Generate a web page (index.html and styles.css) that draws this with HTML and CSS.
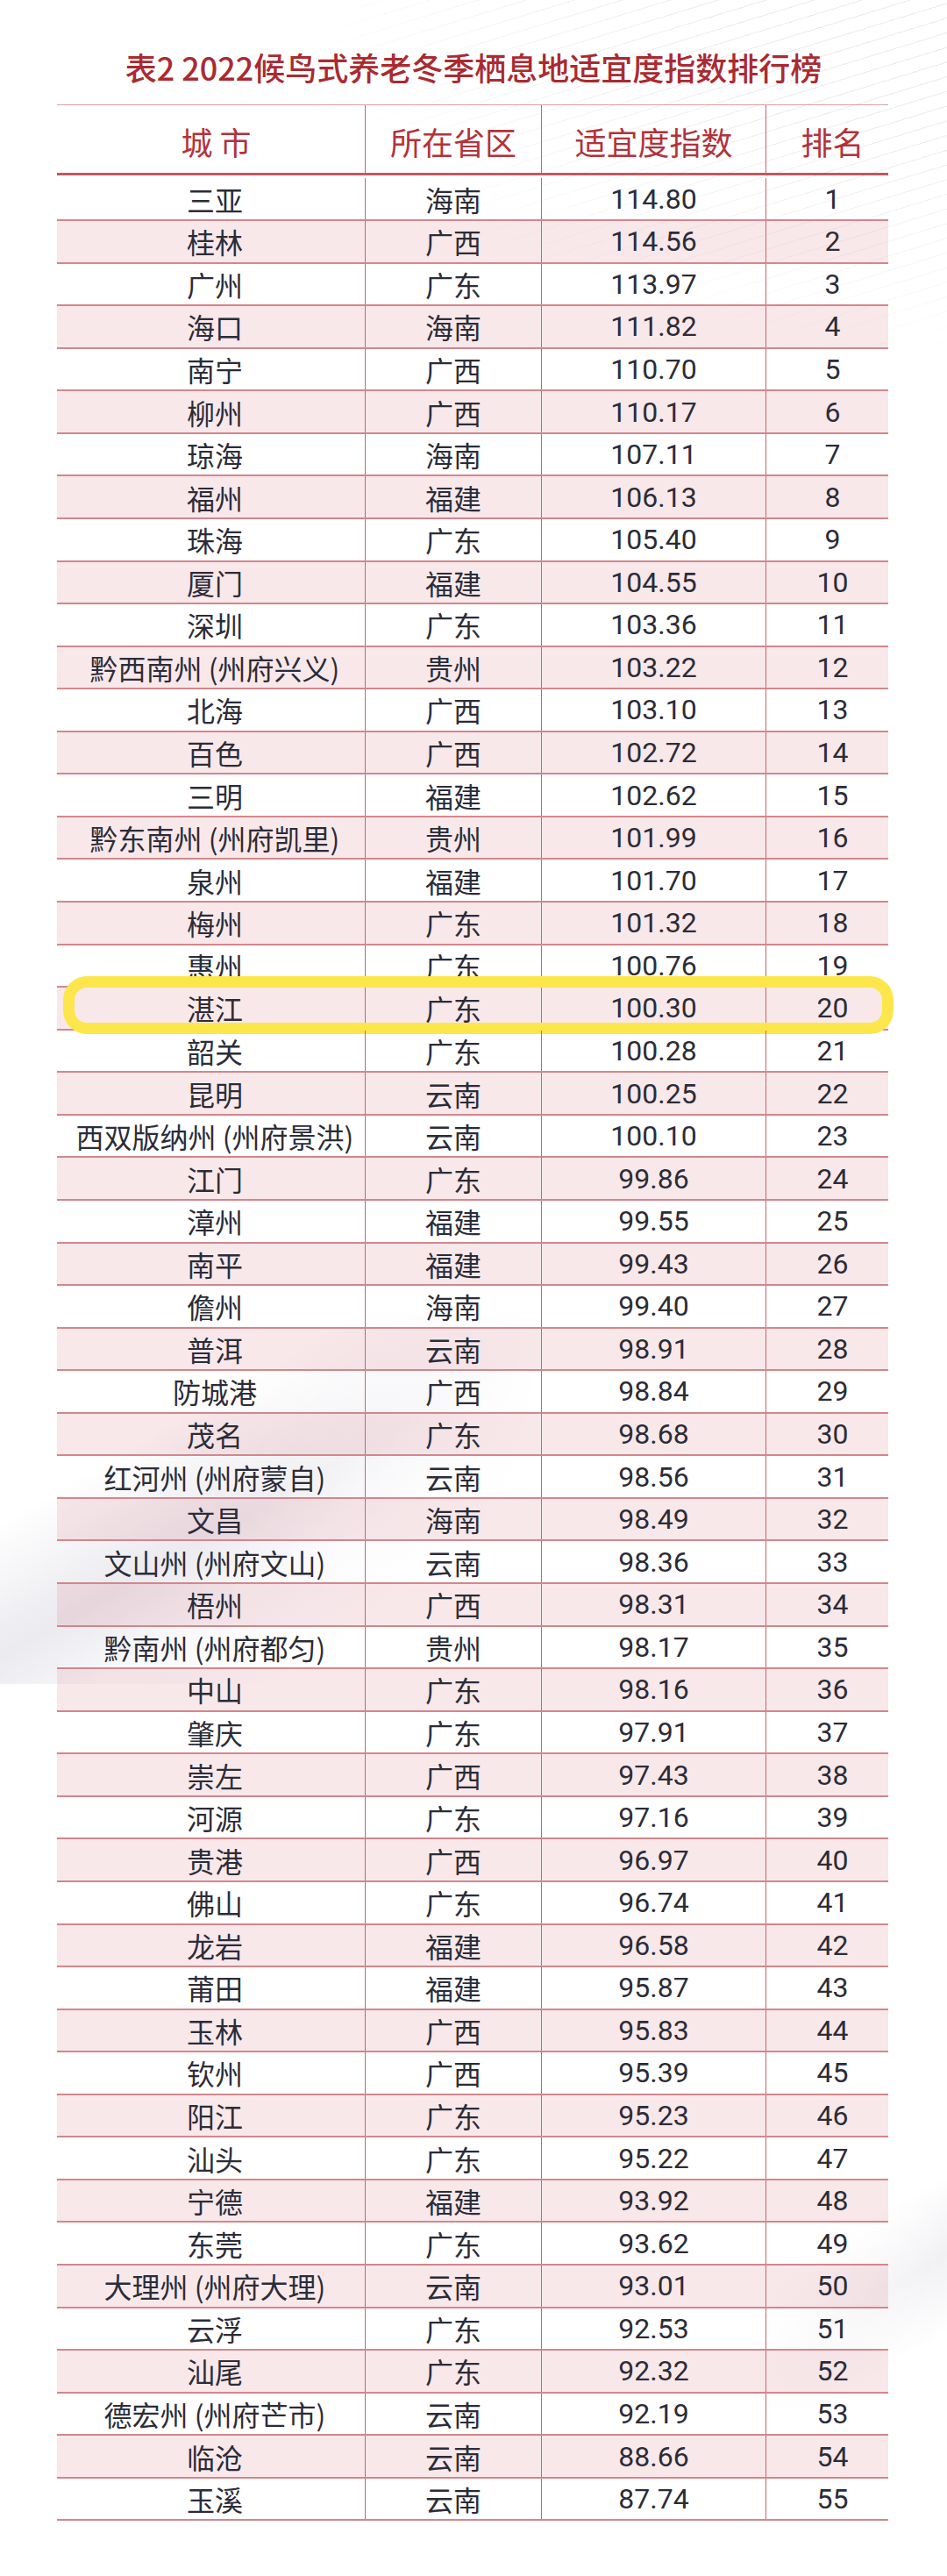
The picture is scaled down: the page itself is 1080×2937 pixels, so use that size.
FILE: index.html
```html
<!DOCTYPE html>
<html lang="zh-CN">
<head>
<meta charset="utf-8">
<title>表2 2022候鸟式养老冬季栖息地适宜度指数排行榜</title>
<link rel="stylesheet" href="styles.css">
</head>
<body>
<div class="page">
  <h1 class="title">表2 2022候鸟式养老冬季栖息地适宜度指数排行榜</h1>
  <div class="table" role="table">
    <div class="row head" role="row">
      <div class="cell city" role="columnheader">城 市</div>
      <div class="cell" role="columnheader">所在省区</div>
      <div class="cell" role="columnheader">适宜度指数</div>
      <div class="cell rank" role="columnheader">排名</div>
    </div>
    <div class="row first" role="row"><div class="cell city">三亚</div><div class="cell">海南</div><div class="cell num">114.80</div><div class="cell num rank">1</div></div>
    <div class="row alt" role="row"><div class="cell city">桂林</div><div class="cell">广西</div><div class="cell num">114.56</div><div class="cell num rank">2</div></div>
    <div class="row" role="row"><div class="cell city">广州</div><div class="cell">广东</div><div class="cell num">113.97</div><div class="cell num rank">3</div></div>
    <div class="row alt" role="row"><div class="cell city">海口</div><div class="cell">海南</div><div class="cell num">111.82</div><div class="cell num rank">4</div></div>
    <div class="row" role="row"><div class="cell city">南宁</div><div class="cell">广西</div><div class="cell num">110.70</div><div class="cell num rank">5</div></div>
    <div class="row alt" role="row"><div class="cell city">柳州</div><div class="cell">广西</div><div class="cell num">110.17</div><div class="cell num rank">6</div></div>
    <div class="row" role="row"><div class="cell city">琼海</div><div class="cell">海南</div><div class="cell num">107.11</div><div class="cell num rank">7</div></div>
    <div class="row alt" role="row"><div class="cell city">福州</div><div class="cell">福建</div><div class="cell num">106.13</div><div class="cell num rank">8</div></div>
    <div class="row" role="row"><div class="cell city">珠海</div><div class="cell">广东</div><div class="cell num">105.40</div><div class="cell num rank">9</div></div>
    <div class="row alt" role="row"><div class="cell city">厦门</div><div class="cell">福建</div><div class="cell num">104.55</div><div class="cell num rank">10</div></div>
    <div class="row" role="row"><div class="cell city">深圳</div><div class="cell">广东</div><div class="cell num">103.36</div><div class="cell num rank">11</div></div>
    <div class="row alt" role="row"><div class="cell city">黔西南州 (州府兴义)</div><div class="cell">贵州</div><div class="cell num">103.22</div><div class="cell num rank">12</div></div>
    <div class="row" role="row"><div class="cell city">北海</div><div class="cell">广西</div><div class="cell num">103.10</div><div class="cell num rank">13</div></div>
    <div class="row alt" role="row"><div class="cell city">百色</div><div class="cell">广西</div><div class="cell num">102.72</div><div class="cell num rank">14</div></div>
    <div class="row" role="row"><div class="cell city">三明</div><div class="cell">福建</div><div class="cell num">102.62</div><div class="cell num rank">15</div></div>
    <div class="row alt" role="row"><div class="cell city">黔东南州 (州府凯里)</div><div class="cell">贵州</div><div class="cell num">101.99</div><div class="cell num rank">16</div></div>
    <div class="row" role="row"><div class="cell city">泉州</div><div class="cell">福建</div><div class="cell num">101.70</div><div class="cell num rank">17</div></div>
    <div class="row alt" role="row"><div class="cell city">梅州</div><div class="cell">广东</div><div class="cell num">101.32</div><div class="cell num rank">18</div></div>
    <div class="row" role="row"><div class="cell city">惠州</div><div class="cell">广东</div><div class="cell num">100.76</div><div class="cell num rank">19</div></div>
    <div class="row alt marked" role="row"><div class="cell city">湛江</div><div class="cell">广东</div><div class="cell num">100.30</div><div class="cell num rank">20</div><div class="ring" aria-hidden="true"></div></div>
    <div class="row" role="row"><div class="cell city">韶关</div><div class="cell">广东</div><div class="cell num">100.28</div><div class="cell num rank">21</div></div>
    <div class="row alt" role="row"><div class="cell city">昆明</div><div class="cell">云南</div><div class="cell num">100.25</div><div class="cell num rank">22</div></div>
    <div class="row" role="row"><div class="cell city">西双版纳州 (州府景洪)</div><div class="cell">云南</div><div class="cell num">100.10</div><div class="cell num rank">23</div></div>
    <div class="row alt" role="row"><div class="cell city">江门</div><div class="cell">广东</div><div class="cell num">99.86</div><div class="cell num rank">24</div></div>
    <div class="row" role="row"><div class="cell city">漳州</div><div class="cell">福建</div><div class="cell num">99.55</div><div class="cell num rank">25</div></div>
    <div class="row alt" role="row"><div class="cell city">南平</div><div class="cell">福建</div><div class="cell num">99.43</div><div class="cell num rank">26</div></div>
    <div class="row" role="row"><div class="cell city">儋州</div><div class="cell">海南</div><div class="cell num">99.40</div><div class="cell num rank">27</div></div>
    <div class="row alt" role="row"><div class="cell city">普洱</div><div class="cell">云南</div><div class="cell num">98.91</div><div class="cell num rank">28</div></div>
    <div class="row" role="row"><div class="cell city">防城港</div><div class="cell">广西</div><div class="cell num">98.84</div><div class="cell num rank">29</div></div>
    <div class="row alt" role="row"><div class="cell city">茂名</div><div class="cell">广东</div><div class="cell num">98.68</div><div class="cell num rank">30</div></div>
    <div class="row" role="row"><div class="cell city">红河州 (州府蒙自)</div><div class="cell">云南</div><div class="cell num">98.56</div><div class="cell num rank">31</div></div>
    <div class="row alt" role="row"><div class="cell city">文昌</div><div class="cell">海南</div><div class="cell num">98.49</div><div class="cell num rank">32</div></div>
    <div class="row" role="row"><div class="cell city">文山州 (州府文山)</div><div class="cell">云南</div><div class="cell num">98.36</div><div class="cell num rank">33</div></div>
    <div class="row alt" role="row"><div class="cell city">梧州</div><div class="cell">广西</div><div class="cell num">98.31</div><div class="cell num rank">34</div></div>
    <div class="row" role="row"><div class="cell city">黔南州 (州府都匀)</div><div class="cell">贵州</div><div class="cell num">98.17</div><div class="cell num rank">35</div></div>
    <div class="row alt" role="row"><div class="cell city">中山</div><div class="cell">广东</div><div class="cell num">98.16</div><div class="cell num rank">36</div></div>
    <div class="row" role="row"><div class="cell city">肇庆</div><div class="cell">广东</div><div class="cell num">97.91</div><div class="cell num rank">37</div></div>
    <div class="row alt" role="row"><div class="cell city">崇左</div><div class="cell">广西</div><div class="cell num">97.43</div><div class="cell num rank">38</div></div>
    <div class="row" role="row"><div class="cell city">河源</div><div class="cell">广东</div><div class="cell num">97.16</div><div class="cell num rank">39</div></div>
    <div class="row alt" role="row"><div class="cell city">贵港</div><div class="cell">广西</div><div class="cell num">96.97</div><div class="cell num rank">40</div></div>
    <div class="row" role="row"><div class="cell city">佛山</div><div class="cell">广东</div><div class="cell num">96.74</div><div class="cell num rank">41</div></div>
    <div class="row alt" role="row"><div class="cell city">龙岩</div><div class="cell">福建</div><div class="cell num">96.58</div><div class="cell num rank">42</div></div>
    <div class="row" role="row"><div class="cell city">莆田</div><div class="cell">福建</div><div class="cell num">95.87</div><div class="cell num rank">43</div></div>
    <div class="row alt" role="row"><div class="cell city">玉林</div><div class="cell">广西</div><div class="cell num">95.83</div><div class="cell num rank">44</div></div>
    <div class="row" role="row"><div class="cell city">钦州</div><div class="cell">广西</div><div class="cell num">95.39</div><div class="cell num rank">45</div></div>
    <div class="row alt" role="row"><div class="cell city">阳江</div><div class="cell">广东</div><div class="cell num">95.23</div><div class="cell num rank">46</div></div>
    <div class="row" role="row"><div class="cell city">汕头</div><div class="cell">广东</div><div class="cell num">95.22</div><div class="cell num rank">47</div></div>
    <div class="row alt" role="row"><div class="cell city">宁德</div><div class="cell">福建</div><div class="cell num">93.92</div><div class="cell num rank">48</div></div>
    <div class="row" role="row"><div class="cell city">东莞</div><div class="cell">广东</div><div class="cell num">93.62</div><div class="cell num rank">49</div></div>
    <div class="row alt" role="row"><div class="cell city">大理州 (州府大理)</div><div class="cell">云南</div><div class="cell num">93.01</div><div class="cell num rank">50</div></div>
    <div class="row" role="row"><div class="cell city">云浮</div><div class="cell">广东</div><div class="cell num">92.53</div><div class="cell num rank">51</div></div>
    <div class="row alt" role="row"><div class="cell city">汕尾</div><div class="cell">广东</div><div class="cell num">92.32</div><div class="cell num rank">52</div></div>
    <div class="row" role="row"><div class="cell city">德宏州 (州府芒市)</div><div class="cell">云南</div><div class="cell num">92.19</div><div class="cell num rank">53</div></div>
    <div class="row alt" role="row"><div class="cell city">临沧</div><div class="cell">云南</div><div class="cell num">88.66</div><div class="cell num rank">54</div></div>
    <div class="row" role="row"><div class="cell city">玉溪</div><div class="cell">云南</div><div class="cell num">87.74</div><div class="cell num rank">55</div></div>
  </div>
</div>
</body>
</html>
```
FILE: styles.css
```css
html, body {
  margin: 0;
  padding: 0;
  background: #ffffff;
}

.page {
  width: 1080px;
  height: 2937px;
  box-sizing: border-box;
  padding-top: 56px;
  font-family: "Noto Sans CJK SC", "Noto Sans", sans-serif;
  color: #2c2c38;
  background:
    radial-gradient(ellipse 760px 420px at 100% 0%, rgba(255,255,255,0) 0%, rgba(255,255,255,0) 35%, #ffffff 100%) 0 0 / 1080px 520px no-repeat,
    repeating-linear-gradient(163deg, rgba(255,255,255,0) 0 15px, rgba(160,160,180,0.20) 15px 16px) 0 0 / 1080px 520px no-repeat,
    linear-gradient(to right, rgba(255,255,255,0) 0%, rgba(255,255,255,0) 35%, #ffffff 100%) 0 1500px / 620px 420px no-repeat,
    linear-gradient(150deg, rgba(255,255,255,0) 30%, rgba(175,175,195,0.26) 50%, rgba(215,215,228,0.16) 62%, rgba(255,255,255,0) 78%) 0 1500px / 620px 420px no-repeat,
    linear-gradient(to left, rgba(255,255,255,0) 0%, #ffffff 100%) 860px 2440px / 220px 340px no-repeat,
    linear-gradient(150deg, rgba(255,255,255,0) 35%, rgba(190,190,205,0.22) 55%, rgba(255,255,255,0) 75%) 860px 2440px / 220px 340px no-repeat,
    #ffffff;
}

.title {
  margin: 0 0 23px 0;
  font-size: 36px;
  line-height: 40px;
  font-weight: 500;
  color: #a92b31;
  text-align: center;
  letter-spacing: 0;
}

.table {
  width: 948px;
  margin-left: 65px;
  border-top: 1px solid #d7a0a5;
}

.row {
  position: relative;
  display: grid;
  grid-template-columns: 351px 201px 256px 140px;
  height: 48.57px;
  box-sizing: border-box;
  border-bottom: 2px solid #d3868d;
}

.row.head {
  height: 80px;
  border-bottom: 3px solid #c25860;
}

.row.first {
  height: 52px;
  padding-top: 3px;
}

.row.alt {
  background: rgba(214, 110, 125, 0.16);
}

.cell {
  display: flex;
  align-items: center;
  justify-content: center;
  font-size: 32px;
  line-height: 1;
  white-space: nowrap;
  border-left: 1px solid #c9646c;
}

.cell.city {
  border-left: none;
  padding-left: 9px;
}

.cell.rank {
  padding-left: 12px;
}

.head .cell {
  font-size: 36px;
  color: #b3323a;
  padding-top: 4px;
}

.head .cell.city {
  padding-left: 12px;
}

.cell.num {
  font-family: Roboto, "Noto Sans", sans-serif;
}

.ring {
  position: absolute;
  left: 7px;
  top: -13px;
  width: 947px;
  height: 66px;
  box-sizing: border-box;
  border: 13px solid #fce64c;
  border-radius: 27px;
  pointer-events: none;
}
```
